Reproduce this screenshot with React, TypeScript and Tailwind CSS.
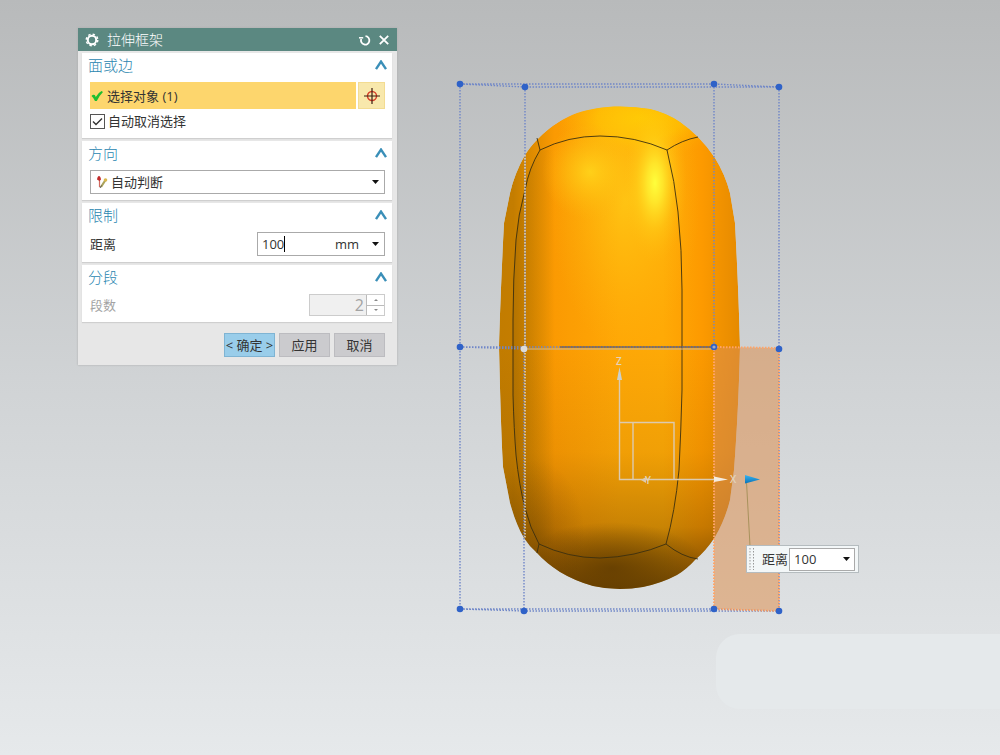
import { useState } from 'react';
import type { ReactNode } from 'react';

function Caret({ className = '' }: { className?: string }) {
  return (
    <svg viewBox="0 0 7 4" className={`h-1 w-[7px] pointer-events-none ${className}`}>
      <path d="M0 0h7L3.5 4z" fill="#111" />
    </svg>
  );
}

function Section({ title, children }: { title: string; children: ReactNode }) {
  const [open, setOpen] = useState(true);

  return (
    <section className="bg-white shadow-[0_1px_1px_#cfcfcf]">
      <h2>
        <button
          type="button"
          onClick={() => setOpen(!open)}
          className="flex h-[26px] w-full items-center justify-between pb-0.5 pl-1.5 pr-[5px] text-[15px] font-light text-[#2a86b0]"
        >
          {title}
          <svg viewBox="0 0 12 10" className="h-2.5 w-3" fill="none" stroke="#3a8fb8" strokeWidth="2.4">
            <path d={open ? 'M1 9.2L6 1.6L11 9.2' : 'M1 1L6 8.6L11 1'} />
          </svg>
        </button>
      </h2>
      {open && <div className="pt-[3px] pr-[7px] pb-1.5 pl-2">{children}</div>}
    </section>
  );
}

const BODY =
  'M620 106.5C603 106.5 590 109 577 113C566 117 558 122 550 128C540 136 532 144 525 155C518 167 513 180 510 193L504 223C502 260 500 310 499 347C500 390 501 430 503 467L510 503C514 517 518 528 524 538Q529 546 537 553Q546 563 560 572Q575 581 593 586Q606 589 620 589Q632 589 643 587Q662 583 677 575Q687 569 695 560Q706 551 715 537Q725 520 730 500L734 470C737 430 739 390 740 347C739 305 737 260 735 223L730 193Q725 174 715 158Q707 146 698 137Q690 129 680 122Q667 113 650 109Q636 106.5 620 106.5Z';

const LEFT_EDGE = 'M540 150Q529 168 525 190Q518 215 516 240Q513 280 513 320V395Q514 430 516 455Q519 485 525 508Q530 528 539 544';

const DOTS = [
  [460, 84], [525, 87], [714, 84], [779, 87],
  [460, 347], [714, 347], [779, 349],
  [460, 609], [524, 611], [714, 609], [779, 611],
];

function Model() {
  return (
    <svg viewBox="440 60 360 570" className="absolute top-[60px] left-[440px] h-[570px] w-[360px]" fill="none">
      <defs>
        <linearGradient id="body" gradientUnits="userSpaceOnUse" x1="499" y1="0" x2="740" y2="0">
          <stop offset="0" stopColor="#c27c00" />
          <stop offset="0.06" stopColor="#c47d00" />
          <stop offset="0.12" stopColor="#d98900" />
          <stop offset="0.23" stopColor="#fb9a02" />
          <stop offset="0.5" stopColor="#ffa806" />
          <stop offset="0.68" stopColor="#ffaa06" />
          <stop offset="0.84" stopColor="#fd9a00" />
          <stop offset="1" stopColor="#e58a00" />
        </linearGradient>
        <linearGradient id="shade" gradientUnits="userSpaceOnUse" x1="0" y1="340" x2="0" y2="589">
          <stop offset="0" stopColor="#4a2c00" stopOpacity="0" />
          <stop offset="0.45" stopColor="#4a2c00" stopOpacity="0.08" />
          <stop offset="0.75" stopColor="#4a2c00" stopOpacity="0.3" />
          <stop offset="0.9" stopColor="#4a2c00" stopOpacity="0.6" />
          <stop offset="1" stopColor="#4a2c00" stopOpacity="0.8" />
        </linearGradient>
        <linearGradient id="side" gradientUnits="userSpaceOnUse" x1="513" y1="0" x2="555" y2="0">
          <stop offset="0" stopColor="#8f5c00" stopOpacity="0.3" />
          <stop offset="1" stopColor="#8f5c00" stopOpacity="0" />
        </linearGradient>
        <radialGradient id="cap">
          <stop offset="0" stopColor="#ffcb00" />
          <stop offset="0.5" stopColor="#ffc000" stopOpacity="0.8" />
          <stop offset="1" stopColor="#ffa500" stopOpacity="0" />
        </radialGradient>
        <radialGradient id="glow">
          <stop offset="0" stopColor="#ffff3c" />
          <stop offset="0.25" stopColor="#fff534" stopOpacity="0.75" />
          <stop offset="0.6" stopColor="#ffdd20" stopOpacity="0.3" />
          <stop offset="1" stopColor="#ffbe10" stopOpacity="0" />
        </radialGradient>
        <radialGradient id="soft">
          <stop offset="0" stopColor="#ffd61c" stopOpacity="0.85" />
          <stop offset="0.5" stopColor="#ffc814" stopOpacity="0.45" />
          <stop offset="1" stopColor="#ffb810" stopOpacity="0" />
        </radialGradient>
        <radialGradient id="dark">
          <stop offset="0" stopColor="#5a3700" stopOpacity="0.7" />
          <stop offset="1" stopColor="#5a3700" stopOpacity="0" />
        </radialGradient>
        <linearGradient id="cone" x1="0" y1="0" x2="0" y2="1">
          <stop offset="0" stopColor="#38b4f0" />
          <stop offset="1" stopColor="#0872b8" />
        </linearGradient>
        <clipPath id="outline">
          <path d={BODY} />
        </clipPath>
      </defs>

      <g clipPath="url(#outline)">
        <path d={BODY} fill="url(#body)" />
        <path d={`${LEFT_EDGE}H570V150Z`} fill="url(#side)" />
        <ellipse cx="640" cy="118" rx="85" ry="42" fill="url(#cap)" />
        <ellipse cx="625" cy="200" rx="75" ry="150" fill="url(#soft)" opacity="0.7" />
        <ellipse cx="590" cy="172" rx="48" ry="48" fill="url(#soft)" />
        <ellipse cx="655" cy="183" rx="32" ry="80" fill="url(#glow)" />
        <path d="M490 340H750V600H490z" fill="url(#shade)" />
        <ellipse cx="612" cy="568" rx="95" ry="46" fill="url(#dark)" />
        <ellipse cx="535" cy="535" rx="50" ry="75" fill="url(#dark)" opacity="0.4" />
      </g>

      {/* face edges */}
      <g stroke="#3c3010" strokeOpacity="0.9">
        <path d={LEFT_EDGE} />
        <path d="M537 138L540 150Q568 136 600 136Q635 136 667 150Q682 140 698 137" />
        <path d="M667 150Q675 182 678 212Q682 250 682 290V390Q681 430 679 470Q675 512 666 544" />
        <path d="M537 553L539 544Q568 558 600 558Q635 557 666 544Q682 557 698 559" />
      </g>

      {/* control cage */}
      <g stroke="#6f86c8" strokeWidth="1.4" strokeDasharray="1.5 1.5">
        <path d="M460 84H714L779 87H525z" />
        <path d="M460 84V609M525 87V349M524 349V611M714 84V347M779 87V611" />
        <path d="M460 347H714M460 347L524 349" />
        <path d="M460 609H714L779 611H524z" />
      </g>
      <path d="M525 155V538" stroke="#e2d3b8" strokeWidth="1.6" strokeDasharray="1.5 1.5" />
      <path d="M560 347H714" stroke="#514c63" />
      <path d="M524 349H714" stroke="#c8b79a" />

      <path d="M714 347L779 348V611L714 609z" fill="#dc9050" fillOpacity="0.55" />
      <path d="M714 347L779 348V611L714 609z" stroke="#ffa468" strokeWidth="2" strokeDasharray="1.5 1.5" />

      {DOTS.map(([x, y]) => (
        <circle key={`${x}-${y}`} cx={x} cy={y} r="3.3" fill="#2f62c8" />
      ))}
      <circle cx="714" cy="347" r="1.6" fill="#a9a9bb" />
      <circle cx="524" cy="349" r="3.3" fill="#dcdcd8" />

      {/* coordinate system */}
      <g stroke="#dccab0" strokeWidth="1.4">
        <path d="M619.5 372V479.5H716M619.5 422.5H674V479M633 422.5V479" />
      </g>
      <path d="M619.5 367L622 380H617z" fill="#c9d0ce" />
      <path d="M714 476.5L728 479.5L714 482z" fill="#f4ece0" />
      <path d="M641 480L646 477V483z" fill="#dccab0" />
      <g fill="#e3d3bd" fontFamily="Open Sans, sans-serif" fontSize="10" fontWeight="600" textAnchor="middle">
        <text x="619" y="365">Z</text>
        <text x="648" y="484">Y</text>
        <text x="733" y="483">X</text>
      </g>

      {/* drag handle */}
      <path d="M746.5 482L750 546" stroke="#a8925c" />
      <path d="M745 475L760 479.5L745 483.5z" fill="url(#cone)" />
    </svg>
  );
}

export default function App() {
  const [distance, setDistance] = useState('100');
  const [segments, setSegments] = useState(2);

  return (
    <main className="relative min-h-screen overflow-hidden bg-linear-to-b from-[#b8babb] via-[#d0d3d5] to-[#e6e9eb] font-['Open_Sans','Noto_Sans_CJK_SC',sans-serif] text-[13px] leading-5 text-[#333]">
      <div className="absolute top-[634px] right-0 h-[75px] w-[284px] rounded-l-3xl bg-[#e5e9eb]" />
      <Model />

      <div
        role="dialog"
        aria-labelledby="dialog-title"
        className="absolute top-7 left-[78px] w-[319px] bg-[#e7e7e7] shadow-[0_0_2px_#aaa]"
      >
        <header className="flex h-[23px] items-center bg-[#5b8881] pr-2 pl-[7px] text-white">
          <svg viewBox="0 0 14 14" className="h-3.5 w-3.5" fill="none" stroke="#fff">
            <circle cx="7" cy="7" r="4.2" strokeWidth="2" />
            <circle cx="7" cy="7" r="5.8" strokeWidth="1.4" strokeDasharray="2.4 2.15" />
          </svg>
          <h1 id="dialog-title" className="ml-2 flex-1 text-sm font-light">拉伸框架</h1>
          <button type="button" aria-label="重置" className="mr-2">
            <svg viewBox="0 0 12 12" className="h-3 w-3" fill="none" stroke="#fff" strokeWidth="1.8">
              <path d="M2.2 5A4.2 4.2 0 1 0 6.5 2.2" />
              <path d="M0 3.8H4.2" strokeWidth="1.5" />
            </svg>
          </button>
          <button type="button" aria-label="关闭">
            <svg viewBox="0 0 10 10" className="h-2.5 w-2.5" stroke="#fff" strokeWidth="1.8">
              <path d="M.8.8L9.2 9.2M9.2.8L.8 9.2" />
            </svg>
          </button>
        </header>

        <div className="space-y-[3px] pt-0.5 pr-[5px] pl-1">
          <Section title="面或边">
            <div className="flex gap-0.5">
              <button type="button" className="flex h-[27px] flex-1 items-center gap-1 bg-[#fdd66d] pl-px text-left">
                <svg viewBox="0 0 12 12" className="h-3 w-3" fill="#1fbf2f">
                  <path d="M.5 6Q2 4 3.8 5L4.8 7Q7 2.8 10.5 1L12 2Q8 6 5.8 11H4Q2.8 8 .5 6z" />
                </svg>
                选择对象 (1)
              </button>
              <button type="button" aria-label="点选择" className="flex h-[27px] w-[27px] items-center justify-center border border-[#f3dc92] bg-[#f8e8ac]">
                <svg viewBox="0 0 16 16" className="h-4 w-4" fill="none">
                  <circle cx="8" cy="8" r="4.5" stroke="#d8432c" strokeWidth="1.5" />
                  <path d="M8 0V16M0 8H16" stroke="#3a1c10" strokeWidth="1.2" />
                </svg>
              </button>
            </div>
            <label className="mt-0.5 mb-px flex h-5 items-center gap-[3px]">
              <input
                type="checkbox"
                defaultChecked
                className="peer h-[15px] w-[15px] appearance-none border border-[#555] bg-white"
              />
              <svg viewBox="0 0 15 15" className="pointer-events-none -ml-[18px] hidden h-[15px] w-[15px] peer-checked:block" fill="none" stroke="#333" strokeWidth="1.4">
                <path d="M3 7.5L6 10.5L12 4.5" />
              </svg>
              自动取消选择
            </label>
          </Section>

          <Section title="方向">
            <div className="relative">
              <select aria-label="方向" className="h-6 w-full appearance-none border border-[#aaa] bg-white pl-5">
                <option>自动判断</option>
              </select>
              <svg viewBox="0 0 12 14" className="pointer-events-none absolute top-[5px] left-1.5 h-3.5 w-3" fill="none">
                <path d="M3.5 12V3" stroke="#d06a60" strokeWidth="1.2" />
                <path d="M1 4.5Q1.500 1 3 1T5 4.500L3.500 6z" fill="#c22c2c" />
                <path d="M5 12L9.5 5" stroke="#a9a25c" strokeWidth="2.2" />
                <path d="M4 13L5.5 10.5" stroke="#555" />
                <circle cx="9.5" cy="5" r="1.8" fill="#d9b84e" />
              </svg>
              <Caret className="absolute top-2.5 right-1.5" />
            </div>
          </Section>

          <Section title="限制">
            <div className="flex items-center justify-between">
              <label htmlFor="distance">距离</label>
              <div className="relative flex h-6 w-32 items-center border border-[#aaa] bg-white pl-1">
                <input
                  id="distance"
                  value={distance}
                  onChange={(e) => setDistance(e.target.value)}
                  className="w-[22px] outline-none"
                />
                <span className="h-4 w-px bg-black" />
                <select aria-label="单位" className="h-full flex-1 appearance-none pl-[50px] outline-none">
                  <option>mm</option>
                </select>
                <Caret className="absolute right-[5px]" />
              </div>
            </div>
          </Section>

          <Section title="分段">
            <div className="flex items-center justify-between">
              <label htmlFor="segments" className="text-[#a3a3a3]">段数</label>
              <div className="flex h-[22px] w-[76px] border border-[#ccc] bg-[#f0f0f0] text-[#a3a3a3]">
                <input
                  id="segments"
                  value={segments}
                  disabled
                  readOnly
                  className="min-w-0 flex-1 pr-0.5 text-right text-base"
                />
                <div className="flex w-[18px] flex-col divide-y divide-[#bbb] border-l border-[#bbb] bg-white">
                  <button type="button" aria-label="增加" onClick={() => setSegments(segments + 1)} className="flex flex-1 items-center justify-center">
                    <svg viewBox="0 0 4 2" className="h-0.5 w-1" fill="#888"><path d="M0 2h4L2 0z" /></svg>
                  </button>
                  <button type="button" aria-label="减少" onClick={() => setSegments(segments - 1)} className="flex flex-1 items-center justify-center">
                    <svg viewBox="0 0 4 2" className="h-0.5 w-1" fill="#888"><path d="M0 0h4L2 2z" /></svg>
                  </button>
                </div>
              </div>
            </div>
          </Section>
        </div>

        <footer className="flex justify-end gap-1 pt-[11px] pr-3 pb-2">
          <button type="button" className="h-6 w-[51px] border border-[#7fb4d3] bg-[#99cdea] whitespace-nowrap">&lt; 确定 &gt;</button>
          <button type="button" className="h-6 w-[51px] border border-[#bcbcc0] bg-[#cbcbce]">应用</button>
          <button type="button" className="h-6 w-[51px] border border-[#bcbcc0] bg-[#cbcbce]">取消</button>
        </footer>
      </div>

      {/* on-canvas input */}
      <div className="absolute top-[545px] left-[746px] flex h-7 w-[113px] items-center border border-[#b5bcbf] bg-[#f3f7f8] pr-[3px] pl-0.5">
        <svg viewBox="0 0 6 22" className="h-[22px] w-1.5" stroke="#999" strokeDasharray="1.5 1.5">
          <path d="M1 0V22M4.5 0V22" />
        </svg>
        <label htmlFor="canvas-distance" className="ml-[7px] whitespace-nowrap">距离</label>
        <div className="relative ml-px flex h-[23px] min-w-0 flex-1 items-center border border-[#aaa] bg-white pl-1">
          <input
            id="canvas-distance"
            value={distance}
            onChange={(e) => setDistance(e.target.value)}
            className="w-8 outline-none"
          />
          <button type="button" aria-label="选项" className="ml-auto flex h-full w-4 items-center justify-center">
            <Caret />
          </button>
        </div>
      </div>
    </main>
  );
}
